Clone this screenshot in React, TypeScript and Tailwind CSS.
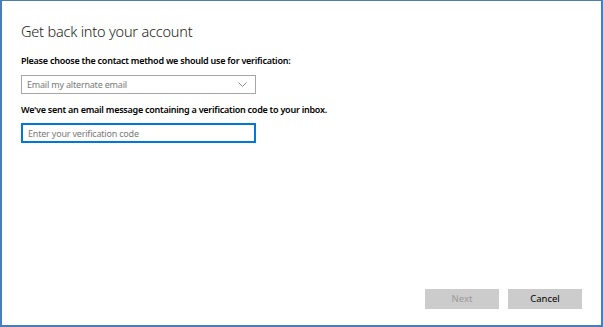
export default function App() {
  return (
    <div
      className="flex h-[327px] w-[603px] flex-col border-x-2 border-t border-b-2 border-[#4a7ebb] bg-white text-[#000]"
      style={{ fontFamily: '"Noto Sans", "Open Sans", sans-serif' }}
    >
      <div className="flex flex-col px-[19px] pt-[20px]">
        <h1 className="text-[14.5px] font-light leading-[20px] tracking-[-0.2px] text-[#222]">Get back into your account</h1>

        <p className="mt-[14px] text-[9px] font-semibold leading-[12px] tracking-[-0.25px]">
          Please choose the contact method we should use for verification:
        </p>
        <div className="mt-[8px] flex h-[19px] w-[235px] items-center justify-between border border-[#a6a6a6] pl-[5px] pr-[8px]">
          <span className="text-[9px] leading-none tracking-[-0.2px] text-[#7a7a7a]">Email my alternate email</span>
          <svg width="9" height="5" viewBox="0 0 9 5" fill="none" stroke="#8a8a8a" strokeWidth="1">
            <path d="M0.5 0.5 L4.5 4.5 L8.5 0.5" />
          </svg>
        </div>

        <p className="mt-[10px] text-[9px] font-semibold leading-[12px] tracking-[-0.25px]">
          We've sent an email message containing a verification code to your inbox.
        </p>
        <div className="mt-[7px] flex h-[20px] w-[235px] items-center border-2 border-[#0078d7] pl-[5px]">
          <span className="text-[9px] leading-none tracking-[-0.2px] text-[#7a7a7a]">Enter your verification code</span>
        </div>
      </div>

      <div className="mt-auto flex justify-end gap-[9px] pb-[16px] pr-[19px]">
        <button className="flex h-[20px] w-[74px] items-center justify-center bg-[#cccccc] text-[9.5px] text-[#9a9a9a]">
          Next
        </button>
        <button className="flex h-[20px] w-[74px] items-center justify-center bg-[#cccccc] text-[9.5px] text-[#000]">
          Cancel
        </button>
      </div>
    </div>
  );
}
